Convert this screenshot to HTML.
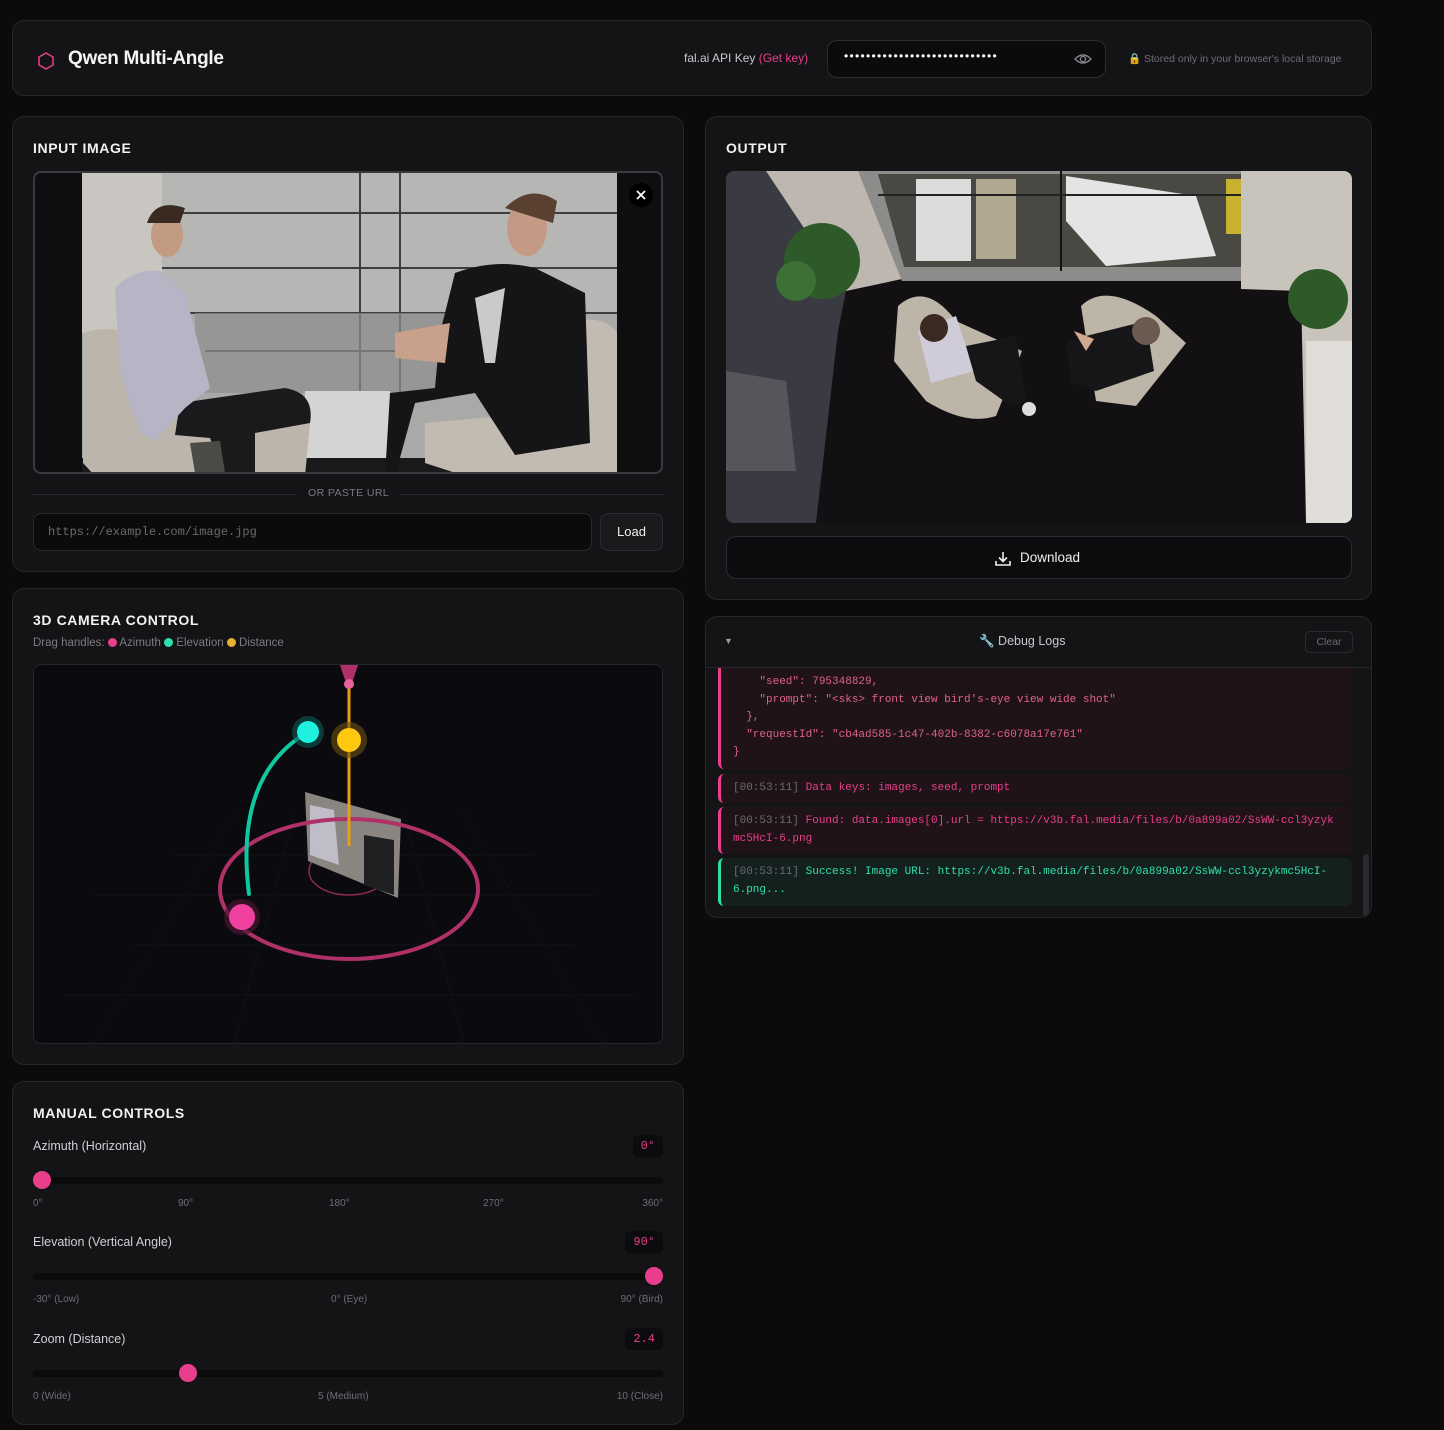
<!DOCTYPE html>
<html><head><meta charset="utf-8"><style>
*{box-sizing:border-box;margin:0;padding:0}
body{width:1444px;height:1430px;background:#0c0b0c;font-family:"Liberation Sans",sans-serif;color:#e8e8ea;position:relative;overflow:hidden}
.card{position:absolute;background:#141416;border:1px solid #262629;border-radius:12px}
.h{position:absolute;font-size:14px;font-weight:bold;letter-spacing:.6px;color:#f2f2f2}
.mono{font-family:"Liberation Mono",monospace}
.abs{position:absolute}
.lbl{position:absolute;font-size:12.5px;color:#d0d0d4}
.val{position:absolute;right:20px;height:22px;padding:0 8px;background:#0c0c0e;border-radius:5px;color:#e83e8c;font-family:"Liberation Mono",monospace;font-size:12px;line-height:22px}
.track{position:absolute;left:20px;right:20px;height:7px;background:#0b0b0c;border-radius:4px}
.thumb{position:absolute;width:18px;height:18px;border-radius:50%;background:#e83e8c;top:-6px}
.tk{position:absolute;font-size:10px;color:#6e6e74}
.log{position:absolute;left:12px;width:634px;border-radius:6px;font-family:"Liberation Mono",monospace;font-size:11px;line-height:18px;padding:0 12px}
.dot{display:inline-block;width:9px;height:9px;border-radius:50%;vertical-align:-1px}
</style></head><body>

<div class="card" style="left:12px;top:20px;width:1360px;height:76px">
  <svg class="abs" style="left:24px;top:30px" width="18" height="20" viewBox="0 0 18 20"><path d="M9 2 L16 6 L16 14 L9 18 L2 14 L2 6 Z" fill="none" stroke="#e83e8c" stroke-width="1.5"/></svg>
  <div class="abs" style="left:55px;top:27px;font-size:19px;font-weight:bold;color:#f4f4f4;letter-spacing:-.3px">Qwen Multi-Angle</div>
  <div class="abs" style="left:671px;top:30px;font-size:12px;color:#c8c8cc">fal.ai API Key <span style="color:#e83e8c">(Get key)</span></div>
  <div class="abs" style="left:814px;top:19px;width:279px;height:38px;background:#0b0b0c;border:1px solid #2c2c30;border-radius:10px">
    <div class="abs" style="left:16px;top:8px;font-size:12px;letter-spacing:1.3px;color:#fff">••••••••••••••••••••••••••••</div>
    <svg class="abs" style="left:246px;top:10px" width="18" height="16" viewBox="0 0 18 16"><path d="M1 8 Q9 0 17 8 Q9 16 1 8 Z" fill="none" stroke="#8a8a90" stroke-width="1.3"/><circle cx="9" cy="8" r="2.6" fill="none" stroke="#8a8a90" stroke-width="1.3"/></svg>
  </div>
  <div class="abs" style="left:1115px;top:31px;font-size:10.5px;color:#6e6e74"><span style="color:#d9b640">🔒</span> Stored only in your browser's local storage</div>
</div>

<!-- input -->
<div class="card" style="left:12px;top:116px;width:672px;height:456px">
  <div class="h" style="left:20px;top:23px">INPUT IMAGE</div>
  <div class="abs" style="left:20px;top:54px;width:630px;height:303px;border:2px solid #3a3a3e;border-radius:8px;overflow:hidden;background:#0e0e10">
    <svg width="630" height="303" viewBox="0 0 630 303" style="display:block">
      <rect x="47" y="0" width="535" height="303" fill="#a9a9a7"/>
      <rect x="47" y="0" width="80" height="160" fill="#c9c5c0"/>
      <rect x="127" y="0" width="455" height="140" fill="#b6b7b4"/>
      <g stroke="#3e3e40" stroke-width="2">
        <line x1="127" y1="40" x2="582" y2="40"/><line x1="127" y1="95" x2="582" y2="95"/><line x1="150" y1="140" x2="582" y2="140"/><line x1="170" y1="178" x2="582" y2="178"/>
        <line x1="325" y1="0" x2="325" y2="220"/><line x1="365" y1="0" x2="365" y2="220"/>
      </g>
      <rect x="160" y="140" width="360" height="80" fill="#8e8e8c" opacity=".7"/>
      <rect x="270" y="218" width="85" height="70" fill="#d4d4d4"/>
      <rect x="47" y="285" width="535" height="18" fill="#1a1a1c"/>
      <!-- chairs -->
      <path d="M48 160 Q80 150 100 165 L110 235 L250 230 L275 250 L270 303 L60 303 L48 290 Z" fill="#bcb5ab"/>
      <path d="M390 250 L500 240 L530 150 Q570 140 582 160 L582 300 L430 303 L390 290 Z" fill="#c2bbb1"/>
      <!-- left person -->
      <path d="M145 230 L250 215 Q280 220 275 250 L220 260 L220 303 L190 303 L175 265 L140 262 Z" fill="#1a1a1c"/>
      <path d="M80 115 Q100 95 125 98 L150 120 L175 215 L150 235 L120 268 L105 260 L85 200 Z" fill="#b7b4c6"/>
      <ellipse cx="132" cy="62" rx="16" ry="22" fill="#c39a82"/>
      <path d="M112 50 Q120 25 150 35 L145 50 Z" fill="#3a2a20"/>
      <path d="M155 270 L185 268 L190 300 L160 300 Z" fill="#4a4a46"/>
      <!-- right person -->
      <path d="M420 100 Q460 85 500 95 L550 120 L555 270 L480 282 L440 220 L380 230 L360 303 L350 303 L355 220 L400 215 L405 160 Z" fill="#151517"/>
      <path d="M440 125 L470 115 L460 190 L450 190 Z" fill="#cacaca"/>
      <ellipse cx="492" cy="55" rx="20" ry="28" fill="#c49a84"/>
      <path d="M470 35 Q495 10 522 28 L518 50 Z" fill="#5a4030"/>
      <path d="M360 160 L415 150 L410 190 L360 185 Z" fill="#c9a08a"/>
      <circle cx="606" cy="22" r="12" fill="#000"/>
      <path d="M602 18 L610 26 M610 18 L602 26" stroke="#fff" stroke-width="1.8"/>
    </svg>
  </div>
  <div class="abs" style="left:20px;top:377px;width:630px;height:1px;background:#2a2a2e"></div>
  <div class="abs" style="left:283px;top:370px;padding:0 12px;background:#141416;font-size:10.5px;letter-spacing:.4px;color:#7a7a80">OR PASTE URL</div>
  <div class="abs" style="left:20px;top:396px;width:559px;height:38px;background:#0b0b0c;border:1px solid #2a2a2e;border-radius:8px;padding-left:14px;line-height:36px;font-family:'Liberation Mono',monospace;font-size:12px;color:#6a6a70">https://example.com/image.jpg</div>
  <div class="abs" style="left:587px;top:396px;width:63px;height:38px;background:#1a1a1d;border:1px solid #2c2c30;border-radius:8px;text-align:center;line-height:36px;font-size:13px;color:#f0f0f0">Load</div>
</div>

<!-- camera -->
<div class="card" style="left:12px;top:588px;width:672px;height:477px">
  <div class="h" style="left:20px;top:23px">3D CAMERA CONTROL</div>
  <div class="abs" style="left:20px;top:48px;font-size:11.5px;color:#7c7c82">Drag handles: <span class="dot" style="background:#e83e8c"></span> Azimuth <span class="dot" style="background:#2ee0b0"></span> Elevation <span class="dot" style="background:#e8b030"></span> Distance</div>
  <div class="abs" style="left:20px;top:75px;width:630px;height:380px;border:1px solid #26262a;border-radius:8px;background:#0a0a0f;overflow:hidden">
    <svg width="629" height="379" viewBox="0 0 629 379" style="display:block">
      <g stroke="#111118" stroke-width="1" fill="none">
        <path d="M60 230 L560 230 M100 280 L540 280 M30 330 L600 330 M140 190 L500 190"/>
        <path d="M200 150 L60 379 M260 150 L200 379 M370 150 L430 379 M430 150 L570 379"/>
      </g>
      <ellipse cx="315" cy="206" rx="40" ry="24" fill="none" stroke="#8a2a55" stroke-width="1.5"/>
      <path d="M271 127 L367 154 L364 233 L274 196 Z" fill="#8a8580"/>
      <path d="M276 140 L300 145 L305 200 L276 190 Z" fill="#c0bcc8"/>
      <path d="M330 170 L360 175 L360 230 L330 220 Z" fill="#202022"/>
      <ellipse cx="315" cy="224" rx="129" ry="70" fill="none" stroke="#b03068" stroke-width="4"/>
      <line x1="315" y1="20" x2="315" y2="181" stroke="#e8a010" stroke-width="3"/>
      <path d="M306 0 L324 0 L318 18 L312 18 Z" fill="#b0306a"/>
      <circle cx="315" cy="19" r="5" fill="#e860a0"/>
      <path d="M274 67 Q200 110 215 229" fill="none" stroke="#10c8a0" stroke-width="4" stroke-linecap="round"/>
      <circle cx="274" cy="67" r="16" fill="#0e5a50" opacity=".6"/>
      <circle cx="274" cy="67" r="11" fill="#20f0e0"/>
      <circle cx="315" cy="75" r="18" fill="#6a5010" opacity=".6"/>
      <circle cx="315" cy="75" r="12" fill="#ffc810"/>
      <circle cx="208" cy="252" r="18" fill="#4a1530" opacity=".7"/>
      <circle cx="208" cy="252" r="13" fill="#f040a0"/>
    </svg>
  </div>
</div>

<!-- manual -->
<div class="card" style="left:12px;top:1081px;width:672px;height:344px">
  <div class="h" style="left:20px;top:23px">MANUAL CONTROLS</div>
  <div class="lbl" style="left:20px;top:57px">Azimuth (Horizontal)</div>
  <div class="val" style="top:53px">0°</div>
  <div class="track" style="top:95px"><div class="thumb" style="left:0"></div></div>
  <div class="tk" style="left:20px;top:116px">0°</div><div class="tk" style="left:165px;top:116px">90°</div><div class="tk" style="left:316px;top:116px">180°</div><div class="tk" style="left:470px;top:116px">270°</div><div class="tk" style="right:20px;top:116px">360°</div>
  <div class="lbl" style="left:20px;top:153px">Elevation (Vertical Angle)</div>
  <div class="val" style="top:149px">90°</div>
  <div class="track" style="top:191px"><div class="thumb" style="right:0"></div></div>
  <div class="tk" style="left:20px;top:212px">-30° (Low)</div><div class="tk" style="left:318px;top:212px">0° (Eye)</div><div class="tk" style="right:20px;top:212px">90° (Bird)</div>
  <div class="lbl" style="left:20px;top:250px">Zoom (Distance)</div>
  <div class="val" style="top:246px">2.4</div>
  <div class="track" style="top:288px"><div class="thumb" style="left:146px"></div></div>
  <div class="tk" style="left:20px;top:309px">0 (Wide)</div><div class="tk" style="left:305px;top:309px">5 (Medium)</div><div class="tk" style="right:20px;top:309px">10 (Close)</div>
</div>

<!-- output -->
<div class="card" style="left:705px;top:116px;width:667px;height:484px">
  <div class="h" style="left:20px;top:23px">OUTPUT</div>
  <div class="abs" style="left:20px;top:54px;width:626px;height:352px;border-radius:8px;overflow:hidden;background:#141214">
    <svg width="626" height="352" viewBox="0 0 626 352" style="display:block">
      <rect width="626" height="352" fill="#121012"/>
      <path d="M40 0 L176 0 L176 108 L120 120 L40 60 Z" fill="#bdb7b0"/>
      <path d="M0 0 L40 0 L120 120 L112 160 L90 352 L0 352 Z" fill="#3a3a42"/>
      <path d="M0 200 L60 210 L70 300 L0 300 Z" fill="#55555c"/>
      <path d="M132 0 L611 0 L575 110 L176 110 Z" fill="#8c8c8a"/>
      <path d="M152 3 L579 3 L555 96 L178 96 Z" fill="#4a4842"/>
      <rect x="190" y="8" width="55" height="82" fill="#dcdcdc"/>
      <rect x="250" y="8" width="40" height="80" fill="#b0a890"/>
      <path d="M340 5 L470 25 L490 85 L380 95 L340 50 Z" fill="#e4e4e4"/>
      <rect x="500" y="8" width="30" height="55" fill="#c8b030"/>
      <line x1="335" y1="0" x2="335" y2="100" stroke="#111" stroke-width="2"/>
      <line x1="152" y1="24" x2="575" y2="24" stroke="#222" stroke-width="2"/>
      <path d="M515 0 L626 0 L626 352 L580 352 L575 120 L515 118 Z" fill="#c8c4bc"/>
      <rect x="580" y="170" width="46" height="182" fill="#e0ddd8"/>
      <circle cx="96" cy="90" r="38" fill="#2e5a2a"/><circle cx="70" cy="110" r="20" fill="#3d7034"/>
      <circle cx="592" cy="128" r="30" fill="#2e5a2a"/>
      <path d="M172 135 Q200 110 230 150 L296 180 L270 245 Q240 255 200 230 L168 190 Z" fill="#bcb5a8"/>
      <path d="M355 135 Q380 110 430 145 L460 172 L410 235 L370 230 Z" fill="#bcb5a8"/>
      <path d="M192 160 L230 145 L248 200 L205 212 Z" fill="#cfcbd8"/>
      <circle cx="208" cy="157" r="14" fill="#3a2a22"/>
      <path d="M240 175 L290 165 L300 230 L285 235 L250 210 Z" fill="#161618"/>
      <circle cx="303" cy="238" r="7" fill="#ddd"/>
      <path d="M340 170 L420 150 L428 200 L370 220 L345 212 Z" fill="#161618"/>
      <circle cx="420" cy="160" r="14" fill="#6a5a50"/>
      <path d="M348 160 L368 168 L360 180 Z" fill="#d0a890"/>
    </svg>
  </div>
  <div class="abs" style="left:20px;top:419px;width:626px;height:43px;background:#0c0b0d;border:1px solid #2c2c30;border-radius:10px">
    <svg class="abs" style="left:267px;top:13px" width="18" height="18" viewBox="0 0 18 18"><path d="M9 2 V11 M5 7.5 L9 11.5 L13 7.5 M2 11 V15 H16 V11" fill="none" stroke="#f0f0f0" stroke-width="1.6"/></svg>
    <div class="abs" style="left:293px;top:13px;font-size:13.5px;color:#f0f0f0">Download</div>
  </div>
</div>

<!-- debug -->
<div class="card" style="left:705px;top:616px;width:667px;height:302px;overflow:hidden">
  <div class="abs" style="left:18px;top:19px;font-size:9px;color:#9a9a9e">▼</div>
  <div class="abs" style="left:273px;top:17px;font-size:12.5px;color:#c8c8cc"><span style="color:#aaa">🔧</span> Debug Logs</div>
  <div class="abs" style="left:599px;top:14px;width:48px;height:22px;border:1px solid #2c2c30;border-radius:5px;font-size:10.5px;color:#6a6a70;text-align:center;line-height:20px">Clear</div>
  <div class="abs" style="left:0;top:50px;width:667px;height:1px;background:#262629"></div>
  <div class="log" style="top:51px;height:101px;background:#1f1318;border-left:3px solid #e83e8c;color:#e06090;border-radius:0 0 6px 6px;padding-top:6px">
<pre class="mono" style="font-size:11px;line-height:17.6px;color:#e06090">    "seed": 795348829,
    "prompt": "&lt;sks&gt; front view bird's-eye view wide shot"
  },
  "requestId": "cb4ad585-1c47-402b-8382-c6078a17e761"
}</pre></div>
  <div class="log" style="top:157px;height:29px;background:#1f1318;border-left:3px solid #e83e8c;color:#e83e8c;padding-top:5px"><span style="color:#6a6a70">[00:53:11]</span> Data keys: images, seed, prompt</div>
  <div class="log" style="top:190px;height:47px;background:#1f1318;border-left:3px solid #e83e8c;color:#e83e8c;padding-top:5px;word-break:break-all"><span style="color:#6a6a70">[00:53:11]</span> Found: data.images[0].url = https://v3b.fal.media/files/b/0a899a02/SsWW-ccl3yzykmc5HcI-6.png</div>
  <div class="log" style="top:241px;height:48px;background:#13201d;border-left:3px solid #2ee0a0;color:#30e0a8;padding-top:5px;word-break:break-all"><span style="color:#6a6a70">[00:53:11]</span> Success! Image URL: https://v3b.fal.media/files/b/0a899a02/SsWW-ccl3yzykmc5HcI-6.png...</div>
  <div class="abs" style="left:657px;top:237px;width:6px;height:62px;background:#2a2a2e;border-radius:3px"></div>
</div>

</body></html>
